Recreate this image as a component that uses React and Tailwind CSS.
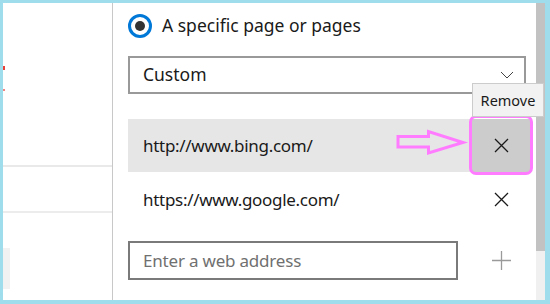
import React from "react";

const XIcon = ({ color = "#1a1a1a" }) => (
  <svg width="15" height="15" viewBox="0 0 15 15">
    <path d="M1 1 L14 14 M14 1 L1 14" stroke={color} strokeWidth="1.3" fill="none" />
  </svg>
);

export default function App() {
  const font = { fontFamily: '"Noto Sans", "Open Sans", sans-serif' };
  return (
    <div
      className="relative w-[550px] h-[304px] bg-[#9fdcec] pt-[3px] pl-[3px] pr-[5px] pb-[4px] flex overflow-hidden"
      style={font}
    >
      {/* Left panel */}
      <div className="w-[110px] h-full bg-white border-r border-[#c8c8c8] flex flex-col">
        <div className="h-[63px]" />
        <div className="w-[2px] h-[4px] bg-[#e8413a]" />
        <div className="h-[19px]" />
        <div className="w-[2px] h-[2px] bg-[#f0857f]" />
        <div className="h-[74px]" />
        <div className="h-[2px] bg-[#e9e9e9]" />
        <div className="h-[44px]" />
        <div className="h-[2px] bg-[#ececec]" />
        <div className="h-[35px]" />
        <div className="w-[7px] h-[41px] bg-[#f2f2f2]" />
      </div>

      {/* Right panel */}
      <div className="w-[423px] h-full bg-white pl-[15px] flex flex-col">
        <div className="mt-[11px] h-[24px] flex items-center gap-[10px]">
          <div className="w-[24px] h-[24px] rounded-full border-[3px] border-[#0078d7] flex items-center justify-center">
            <div className="w-[10px] h-[10px] rounded-full bg-[#333333]" />
          </div>
          <span className="text-[17.5px] leading-none text-[#1a1a1a]">A specific page or pages</span>
        </div>

        <div className="mt-[18px] w-[398px] h-[38px] border-2 border-[#999999] flex items-center justify-between pl-[13px] pr-[10px]">
          <span className="text-[17.5px] leading-none text-[#1a1a1a]">Custom</span>
          <svg width="14" height="8" viewBox="0 0 14 8">
            <path d="M1 1 L7 7 L13 1" stroke="#444" strokeWidth="1" fill="none" />
          </svg>
        </div>

        <div className="mt-[25px] w-[402px] flex flex-col">
          <div className="h-[53px] bg-[#e6e6e6] flex items-center justify-between pl-[15px]">
            <span className="text-[17px] tracking-[-0.3px] leading-none text-[#1a1a1a]">http://www.bing.com/</span>
            <div className="relative w-[58px] h-full bg-[#cccccc] flex items-center justify-center">
              <XIcon />
              <div className="absolute -top-[4px] -bottom-[3px] -left-[3px] -right-[3px] border-[3px] border-[#ff7bff] rounded-[7px]" />
            </div>
          </div>
          <div className="h-[54px] flex items-center justify-between pl-[15px]">
            <span className="text-[17px] tracking-[-0.3px] leading-none text-[#1a1a1a]">https://www.google.com/</span>
            <div className="w-[58px] h-full flex items-center justify-center">
              <XIcon />
            </div>
          </div>
        </div>

        <div className="mt-[15px] flex items-center">
          <div className="w-[330px] h-[39px] border-2 border-[#7a7a7a] flex items-center pl-[13px]">
            <span className="text-[17px] tracking-[-0.2px] leading-none text-[#707070]">Enter a web address</span>
          </div>
          <div className="ml-[14px] w-[58px] h-[39px] flex items-center justify-center">
            <svg width="19" height="19" viewBox="0 0 19 19">
              <path d="M9.5 0 V19 M0 9.5 H19" stroke="#9a9a9a" strokeWidth="1.3" fill="none" />
            </svg>
          </div>
        </div>
      </div>

      {/* Scrollbar */}
      <div className="w-[9px] h-full flex flex-col">
        <div className="h-[248px] bg-[#c2c2c2]" />
        <div className="flex-1 bg-[#f0f0f0]" />
      </div>

      {/* Tooltip */}
      <div className="absolute left-[472px] top-[83px] w-[72px] h-[34px] bg-[#f2f2f2] border border-[#cccccc] flex items-center justify-center">
        <span className="text-[14.5px] leading-none text-[#1a1a1a]">Remove</span>
      </div>

      {/* Pink arrow annotation */}
      <svg className="absolute left-0 top-0" width="550" height="304" viewBox="0 0 550 304">
        <polygon
          points="398,136.5 428.5,136.5 428.5,131.5 463,142.5 428.5,153 428.5,147 398,147"
          fill="none"
          stroke="#ff7bff"
          strokeWidth="3"
          strokeLinejoin="miter"
        />
      </svg>
    </div>
  );
}
